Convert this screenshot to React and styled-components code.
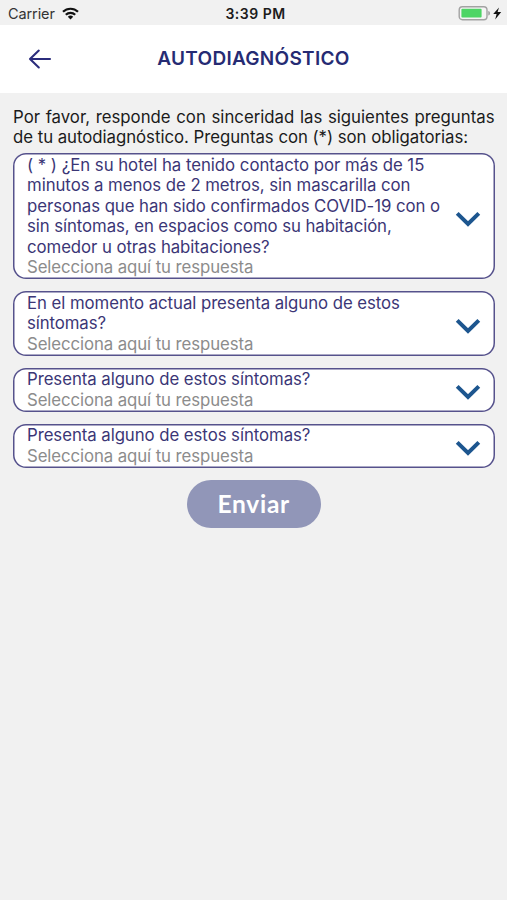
import React from "react";
import styled, { createGlobalStyle } from "styled-components";

const Global = createGlobalStyle`
  * { box-sizing: border-box; }
  html, body { margin: 0; padding: 0; background: #f1f1f1; }
  body { font-family: Inter, "Liberation Sans", sans-serif; }
`;

const Screen = styled.div`
  width: 507px;
  height: 900px;
  overflow: hidden;
  background: #f1f1f1;
`;

const StatusBar = styled.div`
  height: 25px;
  padding: 3px 5px 0 8px;
  display: grid;
  grid-template-columns: 1fr auto 1fr;
  align-items: center;
  color: #1c1c1c;
`;

const Carrier = styled.div`
  display: flex;
  align-items: center;
  gap: 7px;
  font-size: 14.5px;
  line-height: 20px;
  letter-spacing: -0.1px;
  color: #333;

  svg { margin-bottom: 2px; }
`;

const Clock = styled.div`
  font-size: 14px;
  line-height: 20px;
  font-weight: 600;
  letter-spacing: 0.5px;
  padding-left: 1px;
`;

const Power = styled.div`
  display: flex;
  justify-content: flex-end;
  align-items: center;
  padding-bottom: 3px;

  svg { position: relative; left: 1px; }
`;

const Header = styled.header`
  height: 67.5px;
  background: #fff;
  display: grid;
  grid-template-columns: 80px 1fr 80px;
  align-items: center;
`;

const BackButton = styled.button`
  border: 0;
  padding: 0 0 0 28px;
  background: none;
  display: flex;
`;

const Title = styled.h1`
  margin: 1px 0 0;
  text-align: center;
  color: #262b73;
  font-size: 19px;
  line-height: 24px;
  font-weight: 600;
  letter-spacing: 0.28px;
  white-space: nowrap;
`;

const Content = styled.main`
  padding: 14px 12.5px 0 13px;
  display: flex;
  flex-direction: column;
`;

const Line = styled.div`
  height: 20.5px;
  font-size: 16.8px;
  line-height: 21.5px;
  white-space: nowrap;
  letter-spacing: ${(p) => p.$spacing || 0}px;
  text-align-last: ${(p) => (p.$justify ? "justify" : "left")};
`;

const Intro = styled.div`
  color: #1b1b1b;
  margin-bottom: 5.5px;
`;

const Cards = styled.div`
  display: flex;
  flex-direction: column;
  gap: 12px;
`;

const Card = styled.section`
  padding: 1.5px 14px;
  border-radius: 13px;
  background: #fff;
  box-shadow: inset 0 0 0 1.5px #56528c;
  display: flex;
  justify-content: space-between;
  align-items: center;
`;

const Question = styled.div`
  color: #3b3676;
`;

const Answer = styled.div`
  color: #8c8c8c;
`;

const Chevron = styled.svg`
  flex: none;
  display: block;
  margin-top: 6px;
`;

const Submit = styled.button`
  align-self: center;
  width: 134px;
  height: 48.5px;
  margin-top: 12px;
  padding: 1px 0 0;
  border: 0;
  border-radius: 25px;
  background: #9196b8;
  color: #fff;
  font: 700 24.5px/30px Lato, sans-serif;
  letter-spacing: 0.7px;
`;

const questions = [
  [
    ["( * ) ¿En su hotel ha tenido contacto por más de 15", -0.03],
    ["minutos a menos de 2 metros, sin mascarilla con", -0.06],
    ["personas que han sido confirmados COVID-19 con o", -0.065],
    ["sin síntomas, en espacios como su habitación,", -0.08],
    ["comedor u otras habitaciones?", -0.07],
  ],
  [["En el momento actual presenta alguno de estos", -0.06], ["síntomas?", -0.1]],
  [["Presenta alguno de estos síntomas?", -0.06]],
  [["Presenta alguno de estos síntomas?", -0.06]],
];

export default function App() {
  return (
    <Screen>
      <Global />
      <StatusBar>
        <Carrier>
          Carrier
          <svg width="17" height="13" viewBox="0 0 17 13" fill="none" stroke="#111" strokeWidth="2.2">
            <path d="M1 4.8a10.8 10.8 0 0 1 15 0" />
            <path d="M3.8 7.7a6.8 6.8 0 0 1 9.4 0" />
            <path d="M8.5 12.5 5.8 9.8a3.9 3.9 0 0 1 5.4 0z" fill="#111" stroke="none" />
          </svg>
        </Carrier>
        <Clock>3:39 PM</Clock>
        <Power>
          <svg width="45" height="16" viewBox="0 0 45 16">
            <rect x="1.2" y="1.7" width="27.8" height="13" rx="3.2" fill="#f4f4f4" stroke="#a2a2a2" strokeWidth="1.4" />
            <rect x="3.4" y="3.8" width="20.2" height="8.8" rx="1" fill="#4dd565" />
            <path d="M30.3 6c2.2.5 2.2 4 0 4.5z" fill="#999" />
            <path d="M41 2.4 35.2 9h3.4l-1.4 5.4 6-7.3h-3.6z" fill="#111" />
          </svg>
        </Power>
      </StatusBar>
      <Header>
        <BackButton aria-label="Volver">
          <svg width="24" height="20" viewBox="0 0 24 20" fill="none" stroke="#2b2c7c" strokeWidth="2.1" strokeLinecap="round" strokeLinejoin="round">
            <path d="M22 10H2M10.8 1.6 2 10l8.8 8.4" />
          </svg>
        </BackButton>
        <Title>AUTODIAGNÓSTICO</Title>
      </Header>
      <Content>
        <Intro>
          <Line $justify>Por favor, responde con sinceridad las siguientes preguntas</Line>
          <Line $spacing={-0.035}>de tu autodiagnóstico. Preguntas con (*) son obligatorias:</Line>
        </Intro>
        <Cards>
          {questions.map((lines, i) => (
            <Card key={i}>
              <div>
                <Question>
                  {lines.map(([text, spacing]) => (
                    <Line key={text} $spacing={spacing}>{text}</Line>
                  ))}
                </Question>
                <Answer>
                  <Line $spacing={-0.09}>Selecciona aquí tu respuesta</Line>
                </Answer>
              </div>
              <Chevron width="26" height="17" viewBox="0 0 26 17" fill="none" stroke="#1d568f" strokeWidth="4">
                <path d="M2.2 2.4 13 13 23.8 2.4" />
              </Chevron>
            </Card>
          ))}
        </Cards>
        <Submit>Enviar</Submit>
      </Content>
    </Screen>
  );
}
